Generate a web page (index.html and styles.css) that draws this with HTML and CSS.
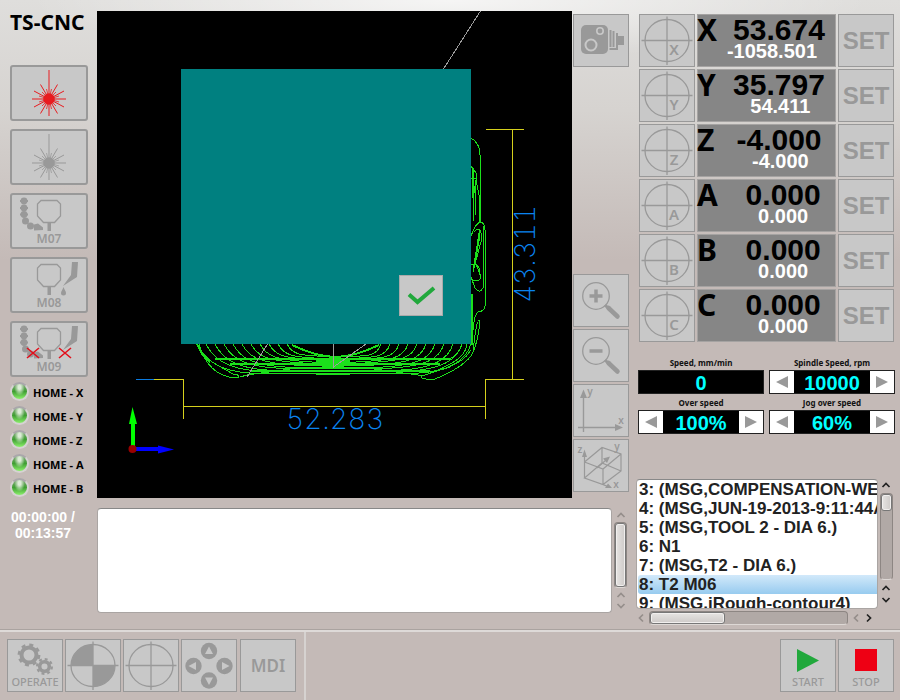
FILE: index.html
```html
<!DOCTYPE html>
<html lang="en">
<head>
<meta charset="utf-8">
<title>TS-CNC</title>
<link rel="stylesheet" href="styles.css">
</head>
<body>
<svg class="defs" aria-hidden="true">
  <symbol id="burst" viewBox="0 0 74 52">
    <circle cx="37" cy="32" r="5.8" fill="currentColor"/>
    <g stroke="currentColor" stroke-width="1" fill="none">
      <path d="M37 3V49M20 32H54M28.500 17.500L45.500 46.500M45.500 17.500L28.500 46.500M22 24L52 40M52 24L22 40"/>
      <path d="M34.500 22L39.500 42M39.500 22L34.500 42M27 29L47 35M47 29L27 35M30 25L44 39M44 25L30 39" stroke-width=".8"/>
    </g>
  </symbol>
  <symbol id="spindle" viewBox="0 0 74 52">
    <path d="M29 5.500H45L48.500 9V21L42.500 27.500H31.500L25.500 21V9Z" fill="none" stroke="currentColor" stroke-width="1.3"/>
    <path d="M35.500 28h3.500v8h-3.500z" fill="currentColor"/>
  </symbol>
  <symbol id="coolant" viewBox="0 0 74 52">
    <g fill="currentColor">
      <circle cx="12" cy="6" r="3.400"/><circle cx="12" cy="13" r="3.400"/><circle cx="12" cy="19.500" r="3.400"/>
      <circle cx="13.500" cy="26" r="3.500"/><circle cx="18.500" cy="31" r="3.500"/>
      <path d="M8 5h8v2H8zM8 12h8v2H8zM8 18.500h8v2H8zM22 29.500l4-1 5 4v2.500l-9 .5z"/>
    </g>
  </symbol>
  <symbol id="mist" viewBox="0 0 74 52">
    <path d="M60 3h6l-1 15-14 9 8-11z" fill="currentColor"/>
  </symbol>
  <symbol id="target" viewBox="0 0 54 51">
    <g fill="none" stroke="currentColor" stroke-width="1.300">
      <ellipse cx="27" cy="25.500" rx="22" ry="21"/>
      <path d="M1.500 25.500H52.500M27 1.500V50"/>
    </g>
  </symbol>
  <symbol id="lens" viewBox="0 0 54 51">
    <circle cx="22" cy="21" r="13.300" fill="none" stroke="currentColor" stroke-width="1.300"/>
    <path d="M31 30L35 34" stroke="currentColor" stroke-width="3"/>
    <path d="M34.500 33L43.500 41.500" stroke="currentColor" stroke-width="4.500" stroke-linecap="round"/>
  </symbol>
  <symbol id="chevron" viewBox="0 0 10 8"><path d="M1.500 6L5 2.500 8.500 6" fill="none" stroke="currentColor" stroke-width="1.700"/></symbol>
</svg>

<div class="app">
  <main class="main">
    <aside class="side">
      <h1 class="brand">TS-CNC</h1>
      <div class="modes">
        <button class="mode on" aria-label="Laser on"><svg viewBox="0 0 74 52"><use href="#burst"/></svg></button>
        <button class="mode" aria-label="Laser off"><svg viewBox="0 0 74 52"><use href="#burst"/></svg></button>
        <button class="mode"><svg viewBox="0 0 74 52"><use href="#spindle"/><use href="#coolant"/><text x="37" y="48">M07</text></svg></button>
        <button class="mode"><svg viewBox="0 0 74 52"><use href="#spindle"/><use href="#mist"/><path d="M51.500 28c1 3 2.500 4.500 2.500 6a2.500 2.500 0 0 1-5 0c0-1.500 1.500-3 2.500-6z" fill="currentColor"/><text x="37" y="48">M08</text></svg></button>
        <button class="mode"><svg viewBox="0 0 74 52"><use href="#spindle"/><use href="#coolant"/><use href="#mist"/><path d="M15 25L27 35M27 25L15 35M47 25L59 35M59 25L47 35" stroke="#e2101c" stroke-width="1.600"/><text x="37" y="48">M09</text></svg></button>
      </div>
      <ul class="homes">
        <li><i class="led"></i>HOME - X</li>
        <li><i class="led"></i>HOME - Y</li>
        <li><i class="led"></i>HOME - Z</li>
        <li><i class="led"></i>HOME - A</li>
        <li><i class="led"></i>HOME - B</li>
      </ul>
      <p class="clock">00:00:00 /<br>00:13:57</p>
    </aside>

    <section class="center">
      <div class="stage">
        <div class="viewport">
          <svg class="plot" viewBox="97 11 475 487">
            <g fill="none" stroke="#1be01b" shape-rendering="crispEdges">
              <g id="passes"></g>
              <path stroke-width="2" d="M197 344Q203 358 210 362M472 294V345M215 358.500H450M230 363.500H440M250 371H430"/>
              <path d="M199 344C204 362 214 376 235 378C241 378 239 374 233 374L212 362M240 377L247 375L305 367H360L425 376"/>
              <path d="M471 138Q480 143 480 155V222M471 166L476 173L476 179L471 178M474 168L473 222M476 180L479 195V222M472 172L476 200M475 180V215"/>
              <path d="M471 236Q476 222 481 222Q485 224 485 230V306Q485 311 478 312Q474 315 473 330"/>
              <path d="M474 232C480 223 484 236 480 245L473 272M480 236L475 262L480 274Q482 281 475 281L471 279M471 265Q480 262 480 275M483 226V288Q480 294 475 288L471 277"/>
              <path stroke-width="2" d="M480 230L474 268M472.500 168V198"/>
              <path d="M473 352Q476 322 479 320Q480 326 478 335Q476 347 471 356C463 366 450 373 435 379Q419 380 422 376Q440 370 450 367"/>
              <path d="M467 344Q466 355 452 363L436 371M462 344Q460 354 448 360M471 350Q464 362 446 368L430 373"/>
              <path stroke-width="2" d="M292 345Q315 356 334 357Q354 357 379 345M316 361H350M322 366H344M316 373.500H350"/>
            </g>
            <g fill="none" stroke="#9c9c9c" shape-rendering="crispEdges">
              <path d="M480.500 11L443.500 69M267.500 344L247 377M333.500 344V367L366 344"/>
            </g>
            <g fill="none" stroke="#d5d01c" shape-rendering="crispEdges">
              <path d="M154 379.500H183.500V419M183.500 406.500H485.500M485.500 419V379.500H524M512.500 379V129.500M486 129.500H524"/>
              <path d="M136 379.500H154" stroke="#0a7ae0"/>
            </g>
            <g class="dims">
              <text x="335" y="429">52.283</text>
              <text transform="translate(535 254) rotate(-90)">43.311</text>
            </g>
            <path d="M131 447V424H129L132.500 407L137 424H135V447Z" fill="#00ff00"/>
            <path d="M136 447H158V445.500L174 449.500L158 453.500V451H136Z" fill="#0000ff"/>
            <circle cx="132.500" cy="449" r="4" fill="#990000"/>
          </svg>
          <div class="dialog">
            <button class="ok" aria-label="Confirm"><svg viewBox="0 0 42 39"><path d="M9 18.500L17.500 26L34 12" fill="none" stroke="#21a83c" stroke-width="4"/></svg></button>
          </div>
        </div>
        <div class="tools">
          <button class="tile" aria-label="Camera"><svg viewBox="0 0 54 51">
            <rect x="7" y="10" width="27" height="29" rx="5" fill="currentColor"/>
            <g fill="none" stroke="#c8c8c8"><circle cx="17" cy="30" r="5.500" stroke-width="2"/><circle cx="26" cy="16" r="3.200" stroke-width="1.600"/></g>
            <path d="M35.500 15h2v17h-2zM38.500 16h2v16h-2zM42 18h2v3h6v9h-6v5h-8.500v-2h6.500z" fill="currentColor"/></svg></button>
          <button class="tile first" aria-label="Zoom in"><svg viewBox="0 0 54 51"><use href="#lens"/><path d="M15.500 21H28.500M22 14.500V27.500" stroke="currentColor" stroke-width="3.500"/></svg></button>
          <button class="tile" aria-label="Zoom out"><svg viewBox="0 0 54 51"><use href="#lens"/><path d="M15.500 21H28.500" stroke="currentColor" stroke-width="3.500"/></svg></button>
          <button class="tile" aria-label="XY view"><svg viewBox="0 0 54 51"><path d="M9.500 47V12M4 42.500H43" stroke="currentColor" stroke-width="1.400"/><path d="M9.500 4.500L13 13H6zM49 42.500L41 46V39z" fill="currentColor"/><text class="sm" x="16" y="10">y</text><text class="sm" x="47" y="39">x</text></svg></button>
          <button class="tile" aria-label="3D view"><svg viewBox="0 0 54 51"><path d="M10.500 38V13M10.500 22L28 7.500L47 14V31L29 44.500L10.500 38L28 23L47 31M28 7.500V23M10.500 22L29 29L47 14M29 29V44.500L35 47" fill="none" stroke="currentColor" stroke-width="1.200"/><path d="M23 28L32 20" stroke="currentColor" stroke-width="1.200"/><path d="M10.500 9.500L13 17H8zM36 16.500L33 23L29 18.500zM38 48H31L34 43.500z" fill="currentColor"/><text class="sm" x="6" y="13">z</text><text class="sm" x="43" y="10">y</text><text class="sm" x="42" y="48">x</text></svg></button>
        </div>
      </div>
      <div class="log">
        <textarea class="messages" aria-label="Messages" readonly></textarea>
        <div class="vbar">
          <svg class="chev dim"><use href="#chevron"/></svg>
          <div class="track"><div class="thumb full"></div></div>
          <svg class="chev dim"><use href="#chevron"/></svg>
          <svg class="chev dim down"><use href="#chevron"/></svg>
        </div>
      </div>
    </section>

    <section class="panel">
      <div class="axes" id="axes"></div>
      <div class="speeds">
        <div class="field"><span class="cap">Speed, mm/min</span><div class="spin"><output>0</output></div></div>
        <div class="field"><span class="cap">Spindle Speed, rpm</span><div class="spin"><button aria-label="Less"><i class="tri left"></i></button><output>10000</output><button aria-label="More"><i class="tri"></i></button></div></div>
        <div class="field"><span class="cap">Over speed</span><div class="spin"><button aria-label="Less"><i class="tri left"></i></button><output>100%</output><button aria-label="More"><i class="tri"></i></button></div></div>
        <div class="field"><span class="cap">Jog over speed</span><div class="spin"><button aria-label="Less"><i class="tri left"></i></button><output>60%</output><button aria-label="More"><i class="tri"></i></button></div></div>
      </div>
      <div class="program">
        <ol class="code">
          <li>3: (MSG,COMPENSATION-WEAR)</li>
          <li>4: (MSG,JUN-19-2013-9:11:44AM)</li>
          <li>5: (MSG,TOOL 2 - DIA 6.)</li>
          <li>6: N1</li>
          <li>7: (MSG,T2 - DIA 6.)</li>
          <li class="current">8: T2 M06</li>
          <li>9: (MSG,iRough-contour4)</li>
        </ol>
        <div class="vbar">
          <svg class="chev"><use href="#chevron"/></svg>
          <div class="track"><div class="thumb short"></div></div>
          <svg class="chev"><use href="#chevron"/></svg>
          <svg class="chev down"><use href="#chevron"/></svg>
        </div>
        <div class="hbar">
          <svg class="chev dim toleft"><use href="#chevron"/></svg>
          <div class="track"><div class="thumb wide"></div></div>
          <svg class="chev dim toleft"><use href="#chevron"/></svg>
          <svg class="chev toright"><use href="#chevron"/></svg>
        </div>
      </div>
    </section>
  </main>

  <footer class="bar">
    <nav class="group">
      <button class="tile"><svg viewBox="0 0 54 51">
        <g fill="none" stroke="currentColor"><circle cx="21" cy="15" r="7.500" stroke-width="4"/><circle cx="21" cy="15" r="10.200" stroke-width="2.400" stroke-dasharray="4 4.010"/><circle cx="36.500" cy="26.500" r="4.800" stroke-width="3.500"/><circle cx="36.500" cy="26.500" r="7.400" stroke-width="2.200" stroke-dasharray="2.900 2.910"/></g>
        <text class="md" x="27" y="46">OPERATE</text></svg></button>
      <button class="tile" aria-label="Work zero"><svg viewBox="0 0 54 51"><use href="#target"/><path d="M27 25.500V4.500A22 21 0 0 0 5 25.500ZM27 25.500H49A22 21 0 0 1 27 46.500Z" fill="currentColor"/></svg></button>
      <button class="tile" aria-label="Reference"><svg viewBox="0 0 54 51"><use href="#target"/></svg></button>
      <button class="tile" aria-label="Jog"><svg viewBox="0 0 54 51">
        <g fill="currentColor"><circle cx="27" cy="11" r="8.200"/><circle cx="27" cy="40.500" r="8.200"/><circle cx="11.500" cy="26" r="8.200"/><circle cx="42.500" cy="26" r="8.200"/></g>
        <path d="M27 6.500L31 14H23zM27 45L23 37.500H31zM6.500 26L14 22V30zM47.500 26L40 22V30z" fill="#c8c8c8"/></svg></button>
      <button class="tile mdi">MDI</button>
    </nav>
    <div class="group end">
      <button class="tile"><svg viewBox="0 0 54 51"><path d="M16 9L38 20.500L16 32Z" fill="#21a83c"/><text class="md" x="27" y="46">START</text></svg></button>
      <button class="tile"><svg viewBox="0 0 54 51"><path d="M16 9H38V31H16Z" fill="#ee0014"/><text class="md" x="27" y="46">STOP</text></svg></button>
    </div>
  </footer>
</div>
<script src="app.js"></script>
</body>
</html>
```

FILE: styles.css
```css
* { box-sizing: border-box; }
body {
  margin: 0;
  font-family: "Noto Sans", "Open Sans", sans-serif;
  color: #111;
  background-color: #c4bab7;
  background-image:
    radial-gradient(ellipse 420px 60px at 50% 0, rgba(255,255,255,.7), rgba(255,255,255,0)),
    linear-gradient(#dfdedc 0, #d6d3d0 110px, #c4bab7 260px);
  background-repeat: no-repeat;
}
button { font: inherit; padding: 0; cursor: pointer; }
.defs { position: absolute; width: 0; height: 0; }
.app { display: flex; flex-direction: column; min-height: 100vh; }
.main { flex: 1; display: flex; }

.side { width: 97px; padding: 0 9px 0 10px; }
.brand {
  margin: 8px 0 29px;
  font-size: 21px;
  line-height: 28px;
  font-weight: 700;
  color: #000;
  white-space: nowrap;
}
.modes { display: flex; flex-direction: column; gap: 8px; }
.mode {
  height: 56px;
  border: 2px solid #999;
  border-radius: 3px;
  background: #c8c8c8;
  color: #999;
}
.mode svg, .tile svg, .ok svg { display: block; width: 100%; height: 100%; }
.mode.on { color: #e81c20; }
.mode text, .tile text { fill: currentColor; text-anchor: middle; font-size: 12px; font-weight: 600; }
.tile .sm { font-size: 10px; font-weight: 600; }
.tile .md { font-size: 11px; font-weight: 500; }
.homes { list-style: none; margin: 4px 0 0; padding: 0; }
.homes li { display: flex; align-items: center; gap: 4px; height: 24px; font-size: 11px; line-height: 14px; font-weight: 700; white-space: nowrap; color: #000; }
.led {
  flex: none;
  width: 19px;
  height: 19px;
  margin-bottom: 4px;
  border-radius: 50%;
  border: 2px solid #d6d3d2;
  border-top-color: #aaa7ab;
  background: radial-gradient(ellipse at 50% 22%, #dcecd6 0 12%, rgba(220,236,214,0) 50%), linear-gradient(#7ea877, #3f9f33 50%, #8cf06c);
}
.clock { margin: 8px 0 0 -12px; text-align: center; font: bold 14px/16px "Liberation Sans", sans-serif; color: #fff; }

.center { flex: 1; min-width: 0; padding-top: 11px; }
.stage { display: flex; gap: 1px; }
.viewport { position: relative; flex: 1; background: #000; }
.plot { display: block; width: 100%; }
.dims text { font-family: Inter, sans-serif; font-size: 28px; font-weight: 200; font-variant-numeric: tabular-nums; fill: #0a84f0; text-anchor: middle; }
.dialog { position: absolute; left: 84px; top: 58px; width: 290px; height: 275px; background: #008080; }
.ok { position: absolute; right: 28px; bottom: 28px; width: 44px; height: 41px; border: 1px solid #aaa; background: #c8c8c8; }
.tools { width: 56px; padding: 3px 0 6px; display: flex; flex-direction: column; gap: 2px; }
.tools .first { margin-top: auto; }
.tile { width: 56px; height: 53px; border: 1px solid #999; background: #c8c8c8; color: #999; }
.log { display: flex; height: 105px; margin-top: 10px; }
.messages { flex: 1; resize: none; border: 1px solid #aaa5a3; border-top-color: #888; border-radius: 4px; background: #fff; outline: 0; }

.vbar { width: 16px; display: flex; flex-direction: column; align-items: center; gap: 3px; }
.chev { width: 10px; height: 8px; flex: none; color: #222; }
.chev.dim { color: #958e8b; }
.down { transform: rotate(180deg); }
.toleft { transform: rotate(-90deg); }
.toright { transform: rotate(90deg); }
.track { flex: 1; border: 1px solid #8d8683; border-bottom-color: #ddd8d5; border-radius: 4px; background: #b1a9a6; }
.vbar .track { width: 13px; }
.thumb { border: 1px solid #777; border-radius: 3px; background: linear-gradient(90deg, #e6e4e2, #cecac8); box-shadow: inset 0 0 0 1px #f1efee; }
.thumb.full { height: 100%; }
.thumb.short { height: 17px; }
.thumb.wide { width: 75px; height: 100%; background: linear-gradient(#e6e4e2, #cecac8); }
.log .vbar { width: 17px; padding: 3px 0; }

.panel { width: 271px; padding: 14px 5px 2px 9px; display: flex; flex-direction: column; }
.axes { display: grid; gap: 2px; margin: 0 1px; }
.axis { display: grid; grid-template-columns: 56px 1fr 56px; gap: 2px; }
.axis .tile text { font-size: 15px; font-weight: 600; }
.readout { display: flex; height: 53px; background: #868686; border: 1px solid #a5a3a2; white-space: pre; }
.readout .name { width: 26px; margin-left: -1px; font-size: 30px; line-height: 30px; font-weight: 700; color: #000; }
.values { flex: 1; text-align: center; font-family: "Liberation Sans", sans-serif; font-weight: 700; }
.values b { display: block; font-size: 30px; line-height: 30px; color: #000; }
.values span { display: block; margin-right: 14px; font-size: 20px; line-height: 12px; color: #fff; }
.set { font-family: "Liberation Sans", sans-serif; font-size: 24px; font-weight: 700; }
.speeds { display: grid; grid-template-columns: 1fr 1fr; gap: 4px 5px; margin-top: 16px; }
.cap { display: block; height: 12px; text-align: center; font-size: 8px; line-height: 10px; font-weight: 700; }
.spin { display: flex; height: 24px; border: 1px solid #222; background: #000; }
.spin output { flex: 1; text-align: center; font: bold 20px/24px "Liberation Sans", sans-serif; color: #0ff; }
.spin button { width: 24px; border: 0; background: #fff; display: grid; place-items: center; }
.tri { border: solid transparent; border-width: 6px 0 6px 12px; border-left-color: #999; }
.tri.left { border-width: 6px 12px 6px 0; border-right-color: #999; }

.program { display: grid; grid-template-columns: 1fr 18px; grid-template-rows: 130px 14px; gap: 2px 0; margin: auto -1px 3px -2px; }
.code {
  list-style: none;
  margin: 0;
  padding: 0 0 0 1px;
  overflow: hidden;
  border: 1px solid #aaa5a3;
  border-top-color: #888;
  border-radius: 4px;
  background: #fff;
  font: bold 17px/19px "Liberation Sans", sans-serif;
  color: #222;
}
.code li { height: 19px; padding-left: 1px; white-space: nowrap; }
.code .current { background: linear-gradient(#d2e9fa, #97cbef); border-radius: 3px 0 0 3px; }
.program .vbar { padding: 2px 0 5px; gap: 4px; }
.hbar { display: flex; align-items: center; gap: 3px; padding-right: 4px; }
.hbar .track { height: 14px; }

.bar { display: flex; justify-content: space-between; height: 70px; border-top: 2px solid #dedad8; box-shadow: 0 -1px #aaa3a0; padding-right: 6px; }
.group { display: flex; gap: 2px; padding: 7px 8px 0 7px; border-right: 2px solid #d6d2d0; }
.group.end { padding-right: 0; border: 0; }
.mdi { margin-left: 1px; font-size: 17px; font-weight: 600; }
```

FILE: app.js
```js
// Nested roughing passes, from the outermost contour inwards.
const passes = document.getElementById("passes");
let shapes = "";
for (let k = 0; k < 11; k++) {
  const l = 197 + k * 9;
  const r = 471 - k * 9;
  const y = Math.round(373 - k * 1.6);
  shapes += `<path d="M${l} 344C${l + 7} 358 ${l + 20} ${y - 2} ${l + 52} ${y}H${r - 52}C${r - 20} ${y - 2} ${r - 5} 360 ${r} 344"/>`;
}
passes.innerHTML = shapes;

// Axis rows: work position above machine position, padded like the controller's own fields.
const axes = [
  ["X", "53.674", "-1058.501"],
  ["Y", "35.797", "54.411"],
  ["Z", "-4.000", "-4.000"],
  ["A", "0.000", "0.000"],
  ["B", "0.000", "0.000"],
  ["C", "0.000", "0.000"]
];
document.getElementById("axes").innerHTML = axes.map(([name, work, machine]) => `
  <div class="axis">
    <button class="tile" aria-label="Home ${name}"><svg viewBox="0 0 54 51"><use href="#target"/><text x="34" y="40">${name}</text></svg></button>
    <div class="readout"><span class="name">${name}</span><div class="values"><b>${work.padStart(6, "\u00a0")}</b><span>${machine.padStart(9, "\u00a0")}</span></div></div>
    <button class="tile set">SET</button>
  </div>`).join("");
```
